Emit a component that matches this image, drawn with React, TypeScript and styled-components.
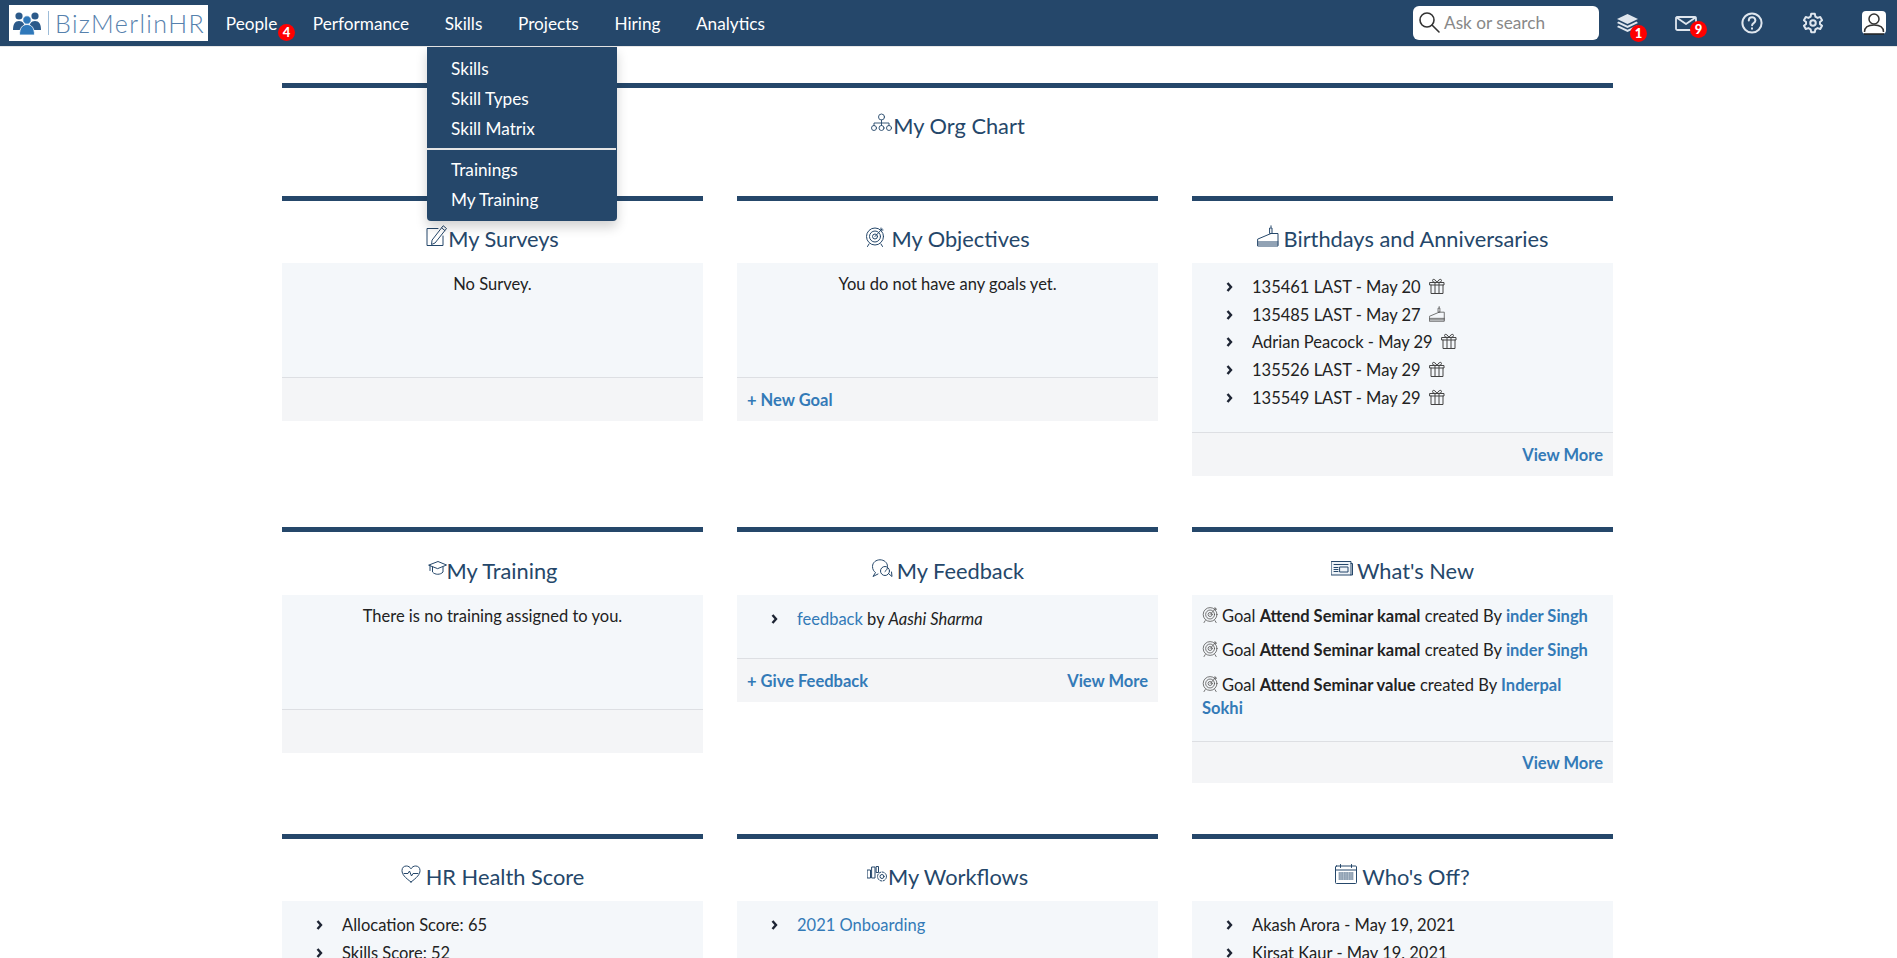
import React, { FC, ReactNode } from 'react';
import styled, { createGlobalStyle } from 'styled-components';

const GlobalStyle = createGlobalStyle`
  html, body {
    margin: 0;
    height: 958px;
    overflow: hidden;
    background: #fff;
    font-family: Lato, "Open Sans", sans-serif;
    font-size: 16.5px;
    color: #222;
  }
`;

const NAVY = '#25476a';

const NavBar = styled.nav`
  display: flex;
  align-items: center;
  height: 46px;
  padding: 0 11px 0 9px;
  background: ${NAVY};
  border-bottom: 1px solid #e7e7e7;
`;

const Logo = styled.a`
  display: flex;
  align-items: center;
  width: 199px;
  height: 36px;
  padding-left: 4px;
  box-sizing: border-box;
  background: #fff;
`;

const LogoDivider = styled.span`
  width: 1px;
  height: 24px;
  margin: 0 6px 0 7px;
  background: #9dbcd8;
`;

const LogoText = styled.span`
  font-size: 25px;
  font-weight: 300;
  letter-spacing: 1.4px;
  color: #5681ad;
`;

const NavList = styled.ul`
  display: flex;
  flex: 1;
  margin: 0;
  padding: 0;
  list-style: none;
`;

const NavItem = styled.li`
  position: relative;
  padding: 0 17.8px;
  font-size: 17.2px;
  line-height: 41px;
  color: #fff;
  white-space: nowrap;
`;

const Badge = styled.span<{ $right: number; $top: number }>`
  position: absolute;
  right: ${(p) => p.$right}px;
  top: ${(p) => p.$top}px;
  width: 17px;
  height: 17px;
  border-radius: 50%;
  background: #f00;
  color: #fff;
  font-size: 13px;
  font-weight: 900;
  line-height: 17px;
  text-align: center;
`;

const Dropdown = styled.div`
  position: absolute;
  z-index: 5;
  left: 0;
  top: 44px;
  width: 190px;
  box-sizing: border-box;
  padding: 7px 0 6px;
  background: ${NAVY};
  border-radius: 0 0 4px 4px;
  box-shadow: 0 6px 12px rgba(0, 0, 0, 0.18);
`;

const DropItem = styled.a`
  display: block;
  padding: 0 24px;
  line-height: 30px;
  color: #fff;
`;

const DropDivider = styled.div`
  height: 2px;
  margin: 4px 1px 5px 0;
  background: #e5e5e5;
`;

const NavTools = styled.div`
  display: flex;
  align-items: center;
  height: 46px;
`;

const SearchBox = styled.div`
  display: flex;
  align-items: center;
  gap: 3px;
  width: 186px;
  height: 34px;
  padding: 0 0 2px 5px;
  box-sizing: border-box;
  background: #fff;
  border-radius: 6px;
  color: #888;
  font-size: 17.2px;
`;

const ToolIcon = styled.div<{ $left: number }>`
  position: relative;
  display: flex;
  margin-left: ${(p) => p.$left}px;
`;

const Main = styled.main`
  width: 1331px;
  margin: 36px 0 0 282px;
`;

const OrgChart = styled.section`
  margin-bottom: 46px;
  border-top: 5px solid ${NAVY};
`;

const Grid = styled.div`
  display: grid;
  grid-template-columns: repeat(3, 421px);
  column-gap: 34px;
  row-gap: 51px;
  align-items: start;
`;

const Card = styled.section`
  border-top: 5px solid ${NAVY};
`;

const Head = styled.h3<{ $gap?: number; $tall?: boolean }>`
  display: flex;
  justify-content: center;
  align-items: center;
  gap: ${(p) => p.$gap ?? 0}px;
  height: ${(p) => (p.$tall ? 63 : 62)}px;
  margin: 0;
  padding-top: ${(p) => (p.$tall ? 15 : 13)}px;
  box-sizing: border-box;
  font-size: 21.8px;
  font-weight: 400;
  color: ${NAVY};
  svg {
    margin-bottom: 5px;
  }
`;

const Body = styled.div<{ $min?: number }>`
  min-height: ${(p) => p.$min ?? 0}px;
  box-sizing: border-box;
  padding: 10px;
  background: #f4f7fa;
`;

const Message = styled.p`
  margin: 0;
  line-height: 22px;
  text-align: center;
`;

const List = styled.ul`
  margin: 0 0 10px;
  padding: 0 0 0 30px;
  list-style: none;
`;

const Row = styled.li`
  display: flex;
  align-items: center;
  height: 27.75px;
`;

const Bullet = styled.span`
  display: flex;
  width: 26px;
  margin-left: -6px;
`;

const RowIcon = styled.span`
  display: flex;
  margin: 0 0 2px 8px;
`;

const Link = styled.a`
  color: #337ab7;
`;

const StrongLink = styled(Link)`
  font-weight: 700;
`;

const NewsItem = styled.p`
  margin: 0 0 11.5px;
  line-height: 23px;
  svg {
    margin-right: 3px;
    vertical-align: -1px;
  }
`;

const Footer = styled.div<{ $short?: boolean }>`
  display: flex;
  justify-content: space-between;
  align-items: center;
  height: ${(p) => (p.$short ? 42 : 44)}px;
  box-sizing: border-box;
  padding: 1px 10px 0;
  background: #f4f5f7;
  border-top: 1px solid #dddfe3;
`;

const Spacer = styled.span``;

type IconProps = { w: number; h: number; vb: string; children: ReactNode; color?: string; sw?: number };

const Svg: FC<IconProps> = ({ w, h, vb, children, color = NAVY, sw = 1 }) => (
  <svg width={w} height={h} viewBox={vb} fill='none' stroke={color} strokeWidth={sw} strokeLinecap='round' strokeLinejoin='round'>
    {children}
  </svg>
);

const LogoMark = () => (
  <svg width={28} height={24} viewBox='0 0 28 24'>
    <circle cx='6' cy='5' r='3.6' fill='#2c5a8a' />
    <circle cx='22' cy='5' r='3.6' fill='#2c5a8a' />
    <path d='M0 19c0-6 2-9 6-9s6 3 6 9zM16 19c0-6 2-9 6-9s6 3 6 9z' fill='#2c5a8a' />
    <circle cx='14' cy='9' r='4.2' fill='#2f78ba' stroke='#fff' strokeWidth='.8' />
    <path d='M6.5 24c0-7 3-10.500 7.500-10.500s7.500 3.500 7.500 10.500z' fill='#2f78ba' stroke='#fff' strokeWidth='.8' />
  </svg>
);

const SearchIcon = () => (
  <Svg w={23} h={23} vb='0 0 23 23' color='#333' sw={1.6}>
    <circle cx='9' cy='9' r='7' />
    <path d='M14 14l7 7' />
  </Svg>
);

const StackIcon = () => (
  <svg width={23} height={20} viewBox='0 0 23 20' fill='#dfe6ee'>
    <path d='M11.500 1L22 6l-10.500 5L1 6z' />
    <path d='M2.500 8.500l9 4.300 9-4.300L22 10l-10.500 5L1 10z' />
    <path d='M2.500 12.500l9 4.300 9-4.300L22 14l-10.500 5L1 14z' />
  </svg>
);

const MailIcon = () => (
  <Svg w={22} h={15} vb='0 0 22 15' color='#dfe6ee' sw={1.8}>
    <rect x='1' y='1' width='20' height='13' rx='1.500' />
    <path d='M1.500 1.500L11 8l9.500-6.500' />
  </Svg>
);

const HelpIcon = () => (
  <Svg w={22} h={22} vb='0 0 22 22' color='#dfe6ee' sw={2}>
    <circle cx='11' cy='11' r='9.600' />
    <path d='M7.800 8.500c0-4.300 6.600-4.300 6.600 0 0 2.600-3.300 2.500-3.300 4.800' />
    <path d='M11 16.300v.4' />
  </Svg>
);

const GearIcon = () => (
  <Svg w={22} h={22} vb='0 0 24 24' color='#dfe6ee' sw={2.2}>
    <path d='M10 2h4l.6 3 2.400 1.400 2.900-1 2 3.500-2.300 2v2.200l2.300 2-2 3.500-2.900-1-2.400 1.400-.6 3h-4l-.6-3L7 17.600l-2.900 1-2-3.500 2.300-2v-2.200l-2.300-2 2-3.500 2.900 1L9.400 5z' />
    <circle cx='12' cy='12' r='3' />
  </Svg>
);

const UserIcon = () => (
  <svg width={24} height={24} viewBox='0 0 24 24'>
    <rect width='24' height='23' rx='4' fill='#fff' />
    <circle cx='12' cy='8' r='5' fill='none' stroke='#333' strokeWidth='1.500' />
    <path d='M2.500 21c0-5 4-7 9.500-7s9.500 2 9.500 7' fill='none' stroke='#333' strokeWidth='1.500' />
    <path d='M2 23h20' stroke='#222' strokeWidth='1.500' />
  </svg>
);

const OrgIcon = () => (
  <Svg w={23} h={20} vb='0 0 23 20' sw={0.9}>
    <circle cx='11.500' cy='4' r='3' />
    <circle cx='4' cy='15' r='2.500' />
    <circle cx='11.500' cy='15' r='2.500' />
    <circle cx='19' cy='15' r='2.500' />
    <path d='M11.500 7v5.500M4 12.500V10h15v2.500' />
  </Svg>
);

const PenIcon = () => (
  <Svg w={22} h={22} vb='0 0 22 22'>
    <path d='M17 11v9.500H1V3.500h11' />
    <path d='M17.500 1l3 2.500L9 18l-3.500 1.500L6 15.500z' />
    <path d='M15.800 3l3 2.500' />
  </Svg>
);

const TargetIcon: FC<{ size?: number; color?: string }> = ({ size = 21, color = NAVY }) => (
  <Svg w={size} h={size} vb='0 0 21 21' color={color}>
    <circle cx='10' cy='10.500' r='8.500' />
    <circle cx='10' cy='10.500' r='5.500' />
    <circle cx='10' cy='10.500' r='2.500' />
    <path d='M10 10.500L17 3M16 2v2h2M4 18l-1.500 2.500M16 18l1.500 2.500' />
  </Svg>
);

const CakeIcon: FC<{ w?: number; h?: number; color?: string }> = ({ w = 22, h = 22, color = NAVY }) => (
  <Svg w={w} h={h} vb='0 0 22 22' color={color}>
    <path d='M1 14L14 8.500h7V21H1z' />
    <path d='M1 17h20M1 19h20' />
    <rect x='13' y='3' width='2' height='5.500' />
    <path d='M14 .8v1.400' />
  </Svg>
);

const GiftIcon = () => (
  <Svg w={16} h={16} vb='0 0 16 16' color='#444'>
    <rect x='1' y='4.500' width='14' height='2.500' />
    <path d='M2 7v8.500h12V7M6 4.500v11M10 4.500v11' />
    <path d='M8 4.500C6.500 1 3.500.5 3.500 2.500S6 4.500 8 4.500zM8 4.500c1.500-3.500 4.500-4 4.500-2S10 4.500 8 4.500z' />
  </Svg>
);

const CapIcon = () => (
  <Svg w={19} h={15} vb='0 0 19 15'>
    <path d='M1 4l9-3.500L18.500 4 10 7.500z' />
    <path d='M4.500 6v5c2.500 3 8 3 10.500 0V6' />
    <path d='M2 4.500v5' />
  </Svg>
);

const ChatIcon = () => (
  <Svg w={23} h={19} vb='0 0 23 19'>
    <path d='M14 12.500C16 11 16.500 9.500 16.500 7.500 16.500 3.500 13 .8 9 .8S1.500 3.500 1.500 7.500c0 3 1.500 5 3 6L2 17.500l5-2.500' />
    <circle cx='14' cy='12' r='4.500' />
    <path d='M18 15l3 2.500-.5-4.500' />
  </Svg>
);

const NewsIcon = () => (
  <Svg w={22} h={15} vb='0 0 22 15'>
    <rect x='.5' y='.5' width='19.500' height='13.500' fill='#eef3f8' />
    <path d='M20 2.500h1.500V14H20' />
    <path d='M3 3.500h14M3 6.500h4M3 8.500h4M3 10.500h4' />
    <rect x='9' y='6' width='8' height='5' />
  </Svg>
);

const HeartIcon = () => (
  <Svg w={20} h={18} vb='0 0 20 18'>
    <path d='M10 17C4 12.500 1 9.500 1 5.500 1 2.500 3 1 5.300 1 7.300 1 9 2 10 3.800 11 2 12.700 1 14.700 1 17 1 19 2.500 19 5.500c0 4-3 7-9 11.500z' />
    <path d='M3 8.500h4l1.500-2.500 2 5 1.500-2.500h5' />
  </Svg>
);

const FlowIcon = () => (
  <Svg w={21} h={16} vb='0 0 21 16'>
    <rect x='.5' y='4' width='3' height='8' />
    <rect x='5' y='1' width='3' height='11' />
    <rect x='9.500' y='.5' width='2' height='6' />
    <circle cx='15' cy='10.500' r='2' />
    <circle cx='15' cy='10.500' r='4.500' strokeDasharray='2 1.500' />
  </Svg>
);

const CalendarIcon = () => (
  <Svg w={22} h={20} vb='0 0 22 20'>
    <rect x='.5' y='2' width='21' height='17.500' rx='1' />
    <path d='M.5 6h21M5.500 .5v3M16.500 .5v3' />
    <path d='M4 9h14M4 11h14M4 13h14M4 15h14' strokeDasharray='1.500 1' />
  </Svg>
);

const Chevron = () => (
  <svg width={7} height={10} viewBox='0 0 7 10' fill='none' stroke='#1d2433' strokeWidth={2.4}>
    <path d='M1.500 1l3.500 4-3.500 4' />
  </svg>
);

const birthdays = [
  { text: '135461 LAST - May 20', cake: false },
  { text: '135485 LAST - May 27', cake: true },
  { text: 'Adrian Peacock - May 29', cake: false },
  { text: '135526 LAST - May 29', cake: false },
  { text: '135549 LAST - May 29', cake: false },
];

const news = [
  { title: 'Attend Seminar kamal', by: 'inder Singh' },
  { title: 'Attend Seminar kamal', by: 'inder Singh' },
  { title: 'Attend Seminar value', by: 'Inderpal Sokhi' },
];

const App: FC = () => (
  <>
    <GlobalStyle />
    <NavBar>
      <Logo>
        <LogoMark />
        <LogoDivider />
        <LogoText>BizMerlinHR</LogoText>
      </Logo>
      <NavList>
        <NavItem>
          People
          <Badge $right={0} $top={21}>4</Badge>
        </NavItem>
        <NavItem>Performance</NavItem>
        <NavItem>
          Skills
          <Dropdown>
            <DropItem>Skills</DropItem>
            <DropItem>Skill Types</DropItem>
            <DropItem>Skill Matrix</DropItem>
            <DropDivider />
            <DropItem>Trainings</DropItem>
            <DropItem>My Training</DropItem>
          </Dropdown>
        </NavItem>
        <NavItem>Projects</NavItem>
        <NavItem>Hiring</NavItem>
        <NavItem>Analytics</NavItem>
      </NavList>
      <NavTools>
        <SearchBox>
          <SearchIcon />
          Ask or search
        </SearchBox>
        <ToolIcon $left={17}>
          <StackIcon />
          <Badge $right={-8} $top={12}>1</Badge>
        </ToolIcon>
        <ToolIcon $left={36}>
          <MailIcon />
          <Badge $right={-10} $top={5}>9</Badge>
        </ToolIcon>
        <ToolIcon $left={44}>
          <HelpIcon />
        </ToolIcon>
        <ToolIcon $left={39}>
          <GearIcon />
        </ToolIcon>
        <ToolIcon $left={38}>
          <UserIcon />
        </ToolIcon>
      </NavTools>
    </NavBar>
    <Main>
      <OrgChart>
        <Head>
          <OrgIcon />
          My Org Chart
        </Head>
      </OrgChart>
      <Grid>
        <Card>
          <Head>
            <PenIcon />
            My Surveys
          </Head>
          <Body $min={114}>
            <Message>No Survey.</Message>
          </Body>
          <Footer />
        </Card>
        <Card>
          <Head $gap={5}>
            <TargetIcon />
            My Objectives
          </Head>
          <Body $min={114}>
            <Message>You do not have any goals yet.</Message>
          </Body>
          <Footer>
            <StrongLink>+ New Goal</StrongLink>
          </Footer>
        </Card>
        <Card>
          <Head $gap={5}>
            <CakeIcon />
            Birthdays and Anniversaries
          </Head>
          <Body>
            <List>
              {birthdays.map((b) => (
                <Row key={b.text}>
                  <Bullet><Chevron /></Bullet>
                  {b.text}
                  <RowIcon>{b.cake ? <CakeIcon w={16} h={16} color='#444' /> : <GiftIcon />}</RowIcon>
                </Row>
              ))}
            </List>
          </Body>
          <Footer>
            <Spacer />
            <StrongLink>View More</StrongLink>
          </Footer>
        </Card>
        <Card>
          <Head $tall>
            <CapIcon />
            My Training
          </Head>
          <Body $min={114}>
            <Message>There is no training assigned to you.</Message>
          </Body>
          <Footer />
        </Card>
        <Card>
          <Head $tall $gap={3}>
            <ChatIcon />
            My Feedback
          </Head>
          <Body $min={63}>
            <List>
              <Row>
                <Bullet><Chevron /></Bullet>
                <Link>feedback</Link>
                &nbsp;by&nbsp;
                <em>Aashi Sharma</em>
              </Row>
            </List>
          </Body>
          <Footer>
            <StrongLink>+ Give Feedback</StrongLink>
            <StrongLink>View More</StrongLink>
          </Footer>
        </Card>
        <Card>
          <Head $tall $gap={4}>
            <NewsIcon />
            What's New
          </Head>
          <Body>
            {news.map((n, i) => (
              <NewsItem key={i}>
                <TargetIcon size={17} color='#555' />
                Goal <b>{n.title}</b> created By <StrongLink>{n.by}</StrongLink>
              </NewsItem>
            ))}
          </Body>
          <Footer $short>
            <Spacer />
            <StrongLink>View More</StrongLink>
          </Footer>
        </Card>
        <Card>
          <Head $gap={5}>
            <HeartIcon />
            HR Health Score
          </Head>
          <Body>
            <List>
              <Row><Bullet><Chevron /></Bullet>Allocation Score: 65</Row>
              <Row><Bullet><Chevron /></Bullet>Skills Score: 52</Row>
            </List>
          </Body>
        </Card>
        <Card>
          <Head>
            <FlowIcon />
            My Workflows
          </Head>
          <Body>
            <List>
              <Row><Bullet><Chevron /></Bullet><Link>2021 Onboarding</Link></Row>
            </List>
          </Body>
        </Card>
        <Card>
          <Head $gap={5}>
            <CalendarIcon />
            Who's Off?
          </Head>
          <Body>
            <List>
              <Row><Bullet><Chevron /></Bullet>Akash Arora - May 19, 2021</Row>
              <Row><Bullet><Chevron /></Bullet>Kirsat Kaur - May 19, 2021</Row>
            </List>
          </Body>
        </Card>
      </Grid>
    </Main>
  </>
);

export default App;
